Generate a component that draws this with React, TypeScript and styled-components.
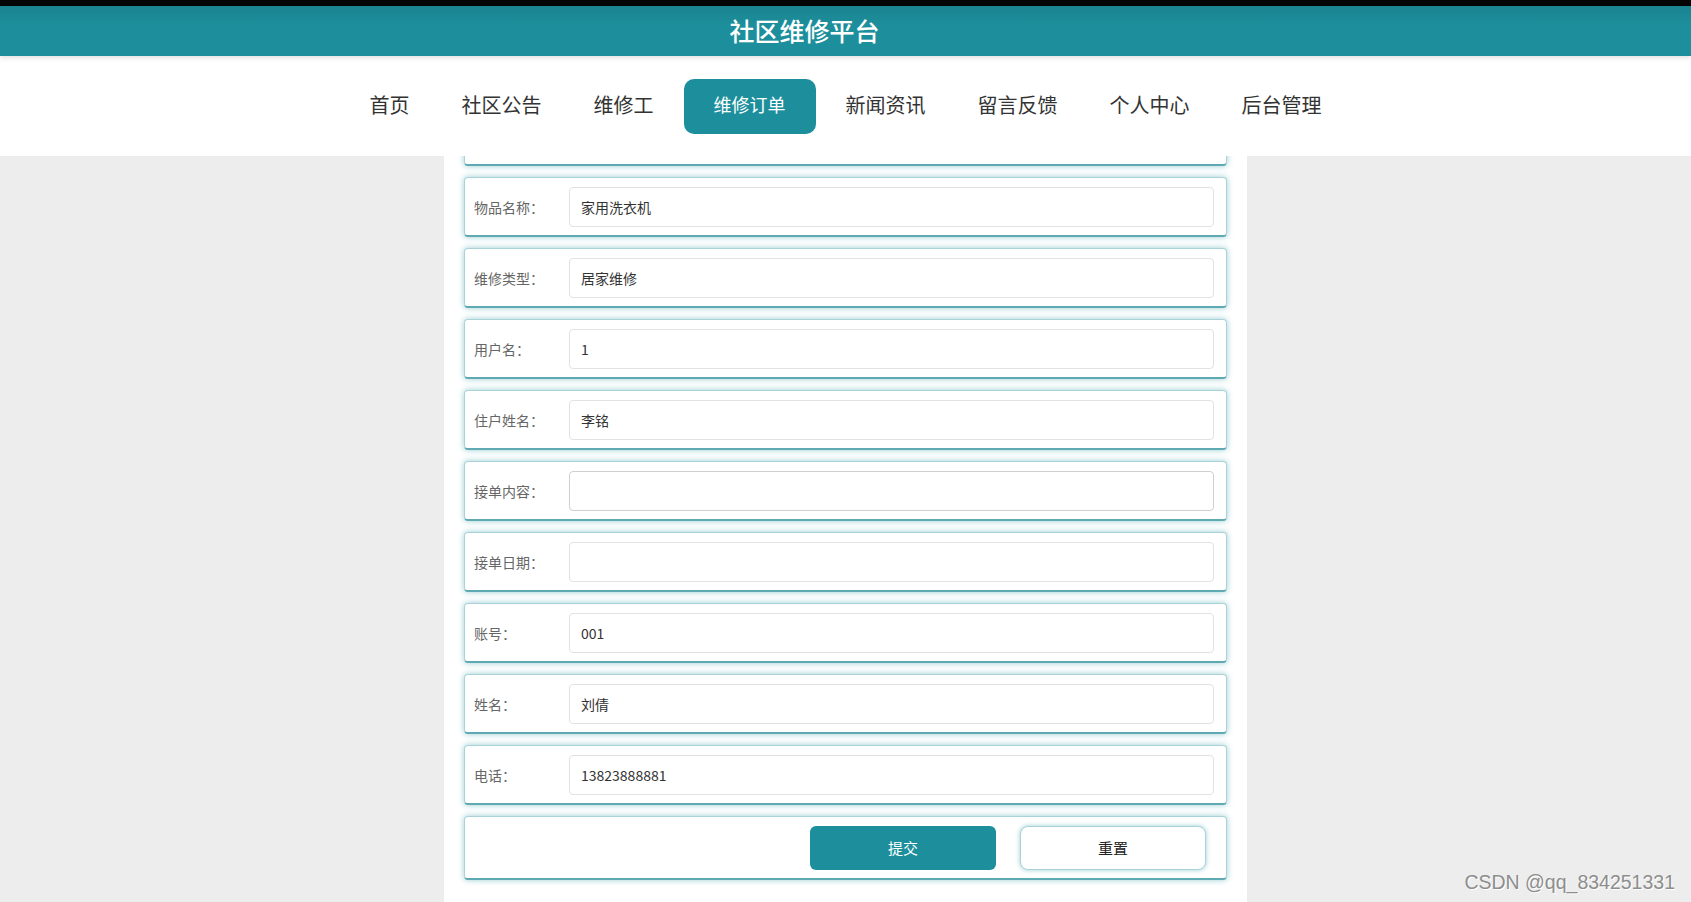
import styled, { createGlobalStyle } from "styled-components";

const GlobalStyle = createGlobalStyle`
  html, body {
    margin: 0;
    padding: 0;
    height: 100%;
    overflow: hidden;
  }
  body {
    background: #ededed;
    font-family: "Noto Sans CJK SC", "Noto Sans", sans-serif;
  }
  #root {
    height: 100%;
  }
`;

const TEAL = "#1d8f9c";

export const Page = styled.div`
  position: relative;
  height: 100vh;
  display: flex;
  flex-direction: column;
`;

export const TopStrip = styled.div`
  height: 6px;
  background: #050505;
  flex-shrink: 0;
`;

export const Header = styled.header`
  height: 50px;
  flex-shrink: 0;
  display: flex;
  align-items: center;
  justify-content: center;
  padding-right: 82px;
  padding-bottom: 2px;
  box-sizing: border-box;
  background: linear-gradient(#1a8390, ${TEAL} 40%);
  box-shadow: 0 2px 5px rgba(0, 0, 0, 0.12);
  position: relative;
  z-index: 2;
`;

export const SiteTitle = styled.h1`
  margin: 0;
  color: #fff;
  font-size: 25px;
  font-weight: 500;
`;

export const Nav = styled.nav`
  height: 100px;
  flex-shrink: 0;
  background: #fff;
  display: flex;
  align-items: center;
  justify-content: center;
  position: relative;
  z-index: 1;
`;

export const NavItem = styled.a<{ $active?: boolean }>`
  display: flex;
  align-items: center;
  height: 55px;
  box-sizing: border-box;
  padding: 0 ${(p) => (p.$active ? "30px" : "26px")} 4px;
  margin: 0 ${(p) => (p.$active ? "4px" : "0")};
  border-radius: 10px;
  font-size: ${(p) => (p.$active ? "18px" : "20px")};
  color: ${(p) => (p.$active ? "#fff" : "#333")};
  background: ${(p) => (p.$active ? TEAL : "transparent")};
  cursor: pointer;
  white-space: nowrap;
`;

export const Main = styled.main`
  flex: 1;
  overflow: hidden;
  display: flex;
  justify-content: center;
`;

export const Column = styled.section`
  width: 803px;
  box-sizing: border-box;
  padding: 0 20px;
  background: #fff;
`;

export const Form = styled.form`
  display: flex;
  flex-direction: column;
  gap: 11px;
  margin-top: -50px;
`;

export const Card = styled.div<{ $tall?: boolean }>`
  height: ${(p) => (p.$tall ? "64px" : "60px")};
  box-sizing: border-box;
  display: flex;
  align-items: center;
  padding: 0 12px 0 9px;
  background: #fff;
  border: 1px solid #a9d3d8;
  border-bottom: 2px solid #5fa9b2;
  border-radius: 4px;
  box-shadow: 0 0 6px rgba(29, 143, 156, 0.45);
`;

export const Label = styled.label`
  width: 95px;
  flex-shrink: 0;
  font-size: 14px;
  color: #666;
`;

export const Input = styled.input`
  flex: 1;
  height: 40px;
  box-sizing: border-box;
  padding: 0 11px;
  border: 1px solid #e2e2e2;
  border-radius: 4px;
  font-family: "Noto Sans CJK SC", "Liberation Sans", sans-serif;
  font-size: 14px;
  color: #333;
  outline: none;
  &:focus {
    border-color: #cfcfcf;
  }
`;

export const Actions = styled(Card)`
  justify-content: flex-end;
  gap: 24px;
  padding-right: 20px;
`;

export const Button = styled.button<{ $primary?: boolean }>`
  width: 186px;
  height: 44px;
  border-radius: ${(p) => (p.$primary ? "6px" : "8px")};
  font-family: "Noto Sans CJK SC", sans-serif;
  font-size: 15px;
  cursor: pointer;
  color: ${(p) => (p.$primary ? "#fff" : "#222")};
  background: ${(p) => (p.$primary ? TEAL : "#fff")};
  border: ${(p) => (p.$primary ? "none" : "1px solid #a9d3d8")};
  box-shadow: ${(p) => (p.$primary ? "none" : "0 0 5px rgba(29, 143, 156, 0.45)")};
`;

export const Watermark = styled.div`
  position: absolute;
  right: 16px;
  bottom: 8px;
  font-family: "Liberation Sans", Arial, sans-serif;
  font-size: 19.5px;
  color: #8d8d8d;
  text-shadow: 1px 1px 0 #fff;
  pointer-events: none;
`;

const navItems = ["首页", "社区公告", "维修工", "维修订单", "新闻资讯", "留言反馈", "个人中心", "后台管理"];

const fields: { label: string; value: string; focus?: boolean }[] = [
  { label: "物品名称：", value: "家用洗衣机" },
  { label: "维修类型：", value: "居家维修" },
  { label: "用户名：", value: "1" },
  { label: "住户姓名：", value: "李铭" },
  { label: "接单内容：", value: "", focus: true },
  { label: "接单日期：", value: "" },
  { label: "账号：", value: "001" },
  { label: "姓名：", value: "刘倩" },
  { label: "电话：", value: "13823888881" },
];

function App() {
  return (
    <>
      <GlobalStyle />
      <Page>
        <TopStrip />
        <Header>
          <SiteTitle>社区维修平台</SiteTitle>
        </Header>
        <Nav>
          {navItems.map((name) => (
            <NavItem key={name} $active={name === "维修订单"}>
              {name}
            </NavItem>
          ))}
        </Nav>
        <Main>
          <Column>
            <Form onSubmit={(e) => e.preventDefault()}>
              {/* previous item, scrolled up behind the nav */}
              <Card />
              {fields.map((f) => (
                <Card key={f.label}>
                  <Label>{f.label}</Label>
                  <Input defaultValue={f.value} autoFocus={f.focus} />
                </Card>
              ))}
              <Actions $tall>
                <Button type="submit" $primary>
                  提交
                </Button>
                <Button type="reset">重置</Button>
              </Actions>
            </Form>
          </Column>
        </Main>
        <Watermark>CSDN @qq_834251331</Watermark>
      </Page>
    </>
  );
}

export default App;
